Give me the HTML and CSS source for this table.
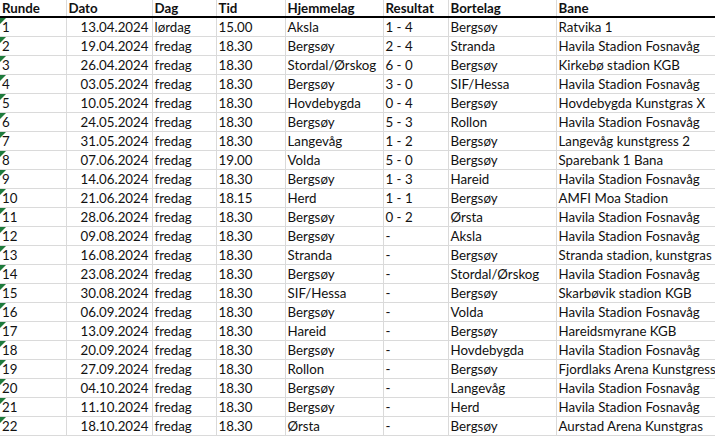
FILE: index.html
```html
<!DOCTYPE html>
<html lang="no">
<head>
<meta charset="utf-8">
<title>Terminliste</title>
<link rel="stylesheet" href="styles.css">
</head>
<body>
<table class="sheet">
<colgroup>
<col class="c-a"><col class="c-b"><col class="c-c"><col class="c-d"><col class="c-e"><col class="c-f"><col class="c-g"><col class="c-h">
</colgroup>
<thead>
<tr><th>Runde</th><th>Dato</th><th>Dag</th><th>Tid</th><th>Hjemmelag</th><th>Resultat</th><th>Bortelag</th><th>Bane</th></tr>
</thead>
<tbody>
<tr><td class="flag">1</td><td class="num">13.04.2024</td><td>lørdag</td><td>15.00</td><td>Aksla</td><td>1 - 4</td><td>Bergsøy</td><td>Ratvika 1</td></tr>
<tr><td class="flag">2</td><td class="num">19.04.2024</td><td>fredag</td><td>18.30</td><td>Bergsøy</td><td>2 - 4</td><td>Stranda</td><td>Havila Stadion Fosnavåg</td></tr>
<tr><td class="flag">3</td><td class="num">26.04.2024</td><td>fredag</td><td>18.30</td><td>Stordal/Ørskog</td><td>6 - 0</td><td>Bergsøy</td><td>Kirkebø stadion KGB</td></tr>
<tr><td class="flag">4</td><td class="num">03.05.2024</td><td>fredag</td><td>18.30</td><td>Bergsøy</td><td>3 - 0</td><td>SIF/Hessa</td><td>Havila Stadion Fosnavåg</td></tr>
<tr><td class="flag">5</td><td class="num">10.05.2024</td><td>fredag</td><td>18.30</td><td>Hovdebygda</td><td>0 - 4</td><td>Bergsøy</td><td>Hovdebygda Kunstgras X</td></tr>
<tr><td class="flag">6</td><td class="num">24.05.2024</td><td>fredag</td><td>18.30</td><td>Bergsøy</td><td>5 - 3</td><td>Rollon</td><td>Havila Stadion Fosnavåg</td></tr>
<tr><td class="flag">7</td><td class="num">31.05.2024</td><td>fredag</td><td>18.30</td><td>Langevåg</td><td>1 - 2</td><td>Bergsøy</td><td>Langevåg kunstgress 2</td></tr>
<tr><td class="flag">8</td><td class="num">07.06.2024</td><td>fredag</td><td>19.00</td><td>Volda</td><td>5 - 0</td><td>Bergsøy</td><td>Sparebank 1 Bana</td></tr>
<tr><td class="flag">9</td><td class="num">14.06.2024</td><td>fredag</td><td>18.30</td><td>Bergsøy</td><td>1 - 3</td><td>Hareid</td><td>Havila Stadion Fosnavåg</td></tr>
<tr><td class="flag">10</td><td class="num">21.06.2024</td><td>fredag</td><td>18.15</td><td>Herd</td><td>1 - 1</td><td>Bergsøy</td><td>AMFI Moa Stadion</td></tr>
<tr><td class="flag">11</td><td class="num">28.06.2024</td><td>fredag</td><td>18.30</td><td>Bergsøy</td><td>0 - 2</td><td>Ørsta</td><td>Havila Stadion Fosnavåg</td></tr>
<tr><td class="flag">12</td><td class="num">09.08.2024</td><td>fredag</td><td>18.30</td><td>Bergsøy</td><td>-</td><td>Aksla</td><td>Havila Stadion Fosnavåg</td></tr>
<tr><td class="flag">13</td><td class="num">16.08.2024</td><td>fredag</td><td>18.30</td><td>Stranda</td><td>-</td><td>Bergsøy</td><td>Stranda stadion, kunstgras</td></tr>
<tr><td class="flag">14</td><td class="num">23.08.2024</td><td>fredag</td><td>18.30</td><td>Bergsøy</td><td>-</td><td>Stordal/Ørskog</td><td>Havila Stadion Fosnavåg</td></tr>
<tr><td class="flag">15</td><td class="num">30.08.2024</td><td>fredag</td><td>18.30</td><td>SIF/Hessa</td><td>-</td><td>Bergsøy</td><td>Skarbøvik stadion KGB</td></tr>
<tr><td class="flag">16</td><td class="num">06.09.2024</td><td>fredag</td><td>18.30</td><td>Bergsøy</td><td>-</td><td>Volda</td><td>Havila Stadion Fosnavåg</td></tr>
<tr><td class="flag">17</td><td class="num">13.09.2024</td><td>fredag</td><td>18.30</td><td>Hareid</td><td>-</td><td>Bergsøy</td><td>Hareidsmyrane KGB</td></tr>
<tr><td class="flag">18</td><td class="num">20.09.2024</td><td>fredag</td><td>18.30</td><td>Bergsøy</td><td>-</td><td>Hovdebygda</td><td>Havila Stadion Fosnavåg</td></tr>
<tr><td class="flag">19</td><td class="num">27.09.2024</td><td>fredag</td><td>18.30</td><td>Rollon</td><td>-</td><td>Bergsøy</td><td>Fjordlaks Arena Kunstgress</td></tr>
<tr><td class="flag">20</td><td class="num">04.10.2024</td><td>fredag</td><td>18.30</td><td>Bergsøy</td><td>-</td><td>Langevåg</td><td>Havila Stadion Fosnavåg</td></tr>
<tr><td class="flag">21</td><td class="num">11.10.2024</td><td>fredag</td><td>18.30</td><td>Bergsøy</td><td>-</td><td>Herd</td><td>Havila Stadion Fosnavåg</td></tr>
<tr><td class="flag">22</td><td class="num">18.10.2024</td><td>fredag</td><td>18.30</td><td>Ørsta</td><td>-</td><td>Bergsøy</td><td>Aurstad Arena Kunstgras</td></tr>
</tbody>
</table>
</body>
</html>
```

FILE: styles.css
```css
html, body {
  margin: 0;
  padding: 0;
  background: #ffffff;
  overflow: hidden;
}

.sheet {
  border-collapse: collapse;
  table-layout: fixed;
  width: 715px;
  font-family: Lato, "Open Sans", sans-serif;
  font-size: 13.3px;
  color: #111;
}

.c-a { width: 66px; }
.c-b { width: 86px; }
.c-c { width: 64px; }
.c-d { width: 69px; }
.c-e { width: 98px; }
.c-f { width: 65px; }
.c-g { width: 108px; }
.c-h { width: 159px; }

.sheet th,
.sheet td {
  padding: 0 2px;
  white-space: nowrap;
  overflow: hidden;
  text-align: left;
  border-right: 1px solid #dadada;
  line-height: 18px;
  height: 18px;
  vertical-align: middle;
}

.sheet th {
  font-weight: 700;
  height: 16px;
  line-height: 16px;
  border-bottom: 2px solid #000;
}

.sheet td {
  border-bottom: 1px solid #dadada;
}

.sheet td.num {
  text-align: right;
  padding-right: 3px;
}

.sheet td.flag {
  position: relative;
}

.sheet td.flag::before {
  content: "";
  position: absolute;
  left: 0;
  top: 0;
  width: 0;
  height: 0;
  border-top: 6px solid #1e7b3c;
  border-right: 6px solid transparent;
}
```
